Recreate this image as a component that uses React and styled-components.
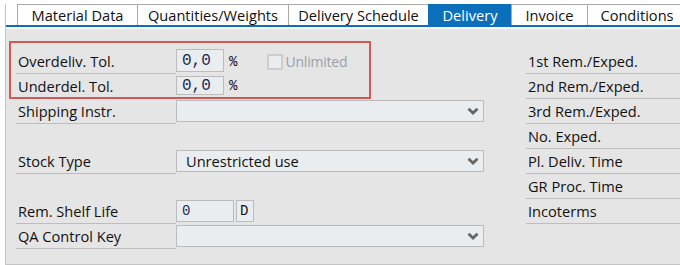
import React from "react";
import styled, { createGlobalStyle } from "styled-components";

const GlobalStyle = createGlobalStyle`
  body {
    margin: 0;
    background: #fff;
    font-family: "Open Sans", "Noto Sans", sans-serif;
    color: #111;
  }
`;

const Frame = styled.div`
  box-sizing: border-box;
  margin: 4px 0 0 5px;
  height: 261px;
  border-left: 1px solid #c4c4c4;
  border-bottom: 1px solid #c4c4c4;
  display: flex;
  flex-direction: column;
  background: #fff;
`;

const TabBar = styled.div`
  box-sizing: border-box;
  display: flex;
  height: 23px;
  padding-left: 12px;
  border-bottom: 2px solid #0b70b9;
  overflow: hidden;
`;

const Tab = styled.div`
  box-sizing: border-box;
  flex: none;
  width: ${(p) => p.$w}px;
  height: 21px;
  margin-left: -1px;
  border: 1px solid #a9a9a9;
  border-bottom: none;
  display: flex;
  align-items: center;
  justify-content: center;
  font-size: 14.6px;
  background: ${(p) => (p.$active ? "#0b70b9" : "#fff")};
  border-color: ${(p) => (p.$active ? "#0b70b9" : "#a9a9a9")};
  color: ${(p) => (p.$active ? "#fff" : "#111")};
`;

const Body = styled.div`
  flex: 1;
  margin-top: 2px;
  background: #e5e5e5;
  display: flex;
  padding: 12px 0 0 3px;
`;

const LeftCol = styled.div`
  width: 480px;
  display: flex;
  flex-direction: column;
`;

const RightCol = styled.div`
  margin: 8px 0 0 auto;
  width: 154px;
  display: flex;
  flex-direction: column;
`;

const RedBox = styled.div`
  box-sizing: border-box;
  width: 362px;
  border: 2px solid #d05858;
  padding: 6px 0 0 5px;
`;

const Row = styled.div`
  display: flex;
  align-items: flex-start;
  height: ${(p) => p.$h || 25}px;
  margin-left: ${(p) => (p.$inset ? 7 : 0)}px;
`;

const Label = styled.div`
  box-sizing: border-box;
  flex: none;
  width: 160px;
  height: 100%;
  padding-left: 2px;
  display: flex;
  align-items: center;
  font-size: 14.6px;
  border-bottom: ${(p) => (p.$plain ? "none" : "1px solid #bdbdbd")};
`;

const Field = styled.div`
  box-sizing: border-box;
  flex: none;
  width: ${(p) => p.$w}px;
  height: ${(p) => p.$h || 22}px;
  margin: ${(p) => (p.$top ?? 1)}px 0 0 ${(p) => p.$ml || 0}px;
  background: #eaedf0;
  border: 1px solid #bcbcbc;
  display: flex;
  align-items: center;
  padding: 0 ${(p) => p.$padR ?? p.$pad ?? 5}px 0 ${(p) => p.$pad ?? 5}px;
  font-size: 14.6px;
`;

const Mono = styled.span`
  font-family: "Liberation Mono", "DejaVu Sans Mono", monospace;
  font-size: ${(p) => p.$size || 16}px;
  color: ${(p) => p.$color || "#1a2a55"};
`;

const Unit = styled.span`
  font-family: "Liberation Mono", monospace;
  font-size: 14px;
  align-self: center;
  margin-left: 5px;
`;

const Check = styled.label`
  display: flex;
  align-items: center;
  align-self: center;
  margin-left: 30px;
  font-size: 14px;
  letter-spacing: -0.2px;
  color: #9ba1aa;
`;

const Box = styled.span`
  box-sizing: border-box;
  width: 16px;
  height: 16px;
  margin-right: 2px;
  border: 2px solid #cdcdcd;
  background: #eaedf0;
`;

const Chevron = styled.svg`
  margin-left: auto;
`;

const Spacer = styled.div`
  height: 25px;
`;

const RightRow = styled.div`
  box-sizing: border-box;
  height: 25px;
  padding-left: 2px;
  border-bottom: 1px solid #bdbdbd;
  display: flex;
  align-items: center;
  font-size: 14.6px;
`;

const tabs = [
  ["Material Data", 121],
  ["Quantities/Weights", 152],
  ["Delivery Schedule", 141],
  ["Delivery", 84],
  ["Invoice", 77],
  ["Conditions", 100],
];

const rightRows = [
  "1st Rem./Exped.",
  "2nd Rem./Exped.",
  "3rd Rem./Exped.",
  "No. Exped.",
  "Pl. Deliv. Time",
  "GR Proc. Time",
  "Incoterms",
];

const Dropdown = ({ children }) => (
  <Field $w={308} $pad={9} $padR={4}>
    {children}
    <Chevron width="12" height="8" viewBox="0 0 12 8">
      <polyline points="1.5,1.8 6,6 10.5,1.8" fill="none" stroke="#666" strokeWidth="2.8" />
    </Chevron>
  </Field>
);

const App = () => {
  return (
    <>
      <GlobalStyle />
      <Frame>
        <TabBar>
          {tabs.map(([name, w]) => (
            <Tab key={name} $w={w} $active={name === "Delivery"}>
              {name}
            </Tab>
          ))}
        </TabBar>
        <Body>
          <LeftCol>
            <RedBox>
              <Row>
                <Label>Overdeliv. Tol.</Label>
                <Field $w={48} $h={23} $top={0}>
                  <Mono>0,0</Mono>
                </Field>
                <Unit>%</Unit>
                <Check>
                  <Box />
                  Unlimited
                </Check>
              </Row>
              <Row $h={23}>
                <Label $plain>Underdel. Tol.</Label>
                <Field $w={48} $h={19} $top={2}>
                  <Mono>0,0</Mono>
                </Field>
                <Unit>%</Unit>
              </Row>
            </RedBox>
            <Row $inset>
              <Label>Shipping Instr.</Label>
              <Dropdown />
            </Row>
            <Spacer />
            <Row $inset>
              <Label>Stock Type</Label>
              <Dropdown>Unrestricted use</Dropdown>
            </Row>
            <Spacer />
            <Row $inset>
              <Label>Rem. Shelf Life</Label>
              <Field $w={58}>
                <Mono $size={14}>0</Mono>
              </Field>
              <Field $w={18} $ml={2} $pad={3}>
                <Mono $size={14} $color="#111">D</Mono>
              </Field>
            </Row>
            <Row $inset>
              <Label>QA Control Key</Label>
              <Dropdown />
            </Row>
          </LeftCol>
          <RightCol>
            {rightRows.map((r) => (
              <RightRow key={r}>{r}</RightRow>
            ))}
          </RightCol>
        </Body>
      </Frame>
    </>
  );
};

export default App;
